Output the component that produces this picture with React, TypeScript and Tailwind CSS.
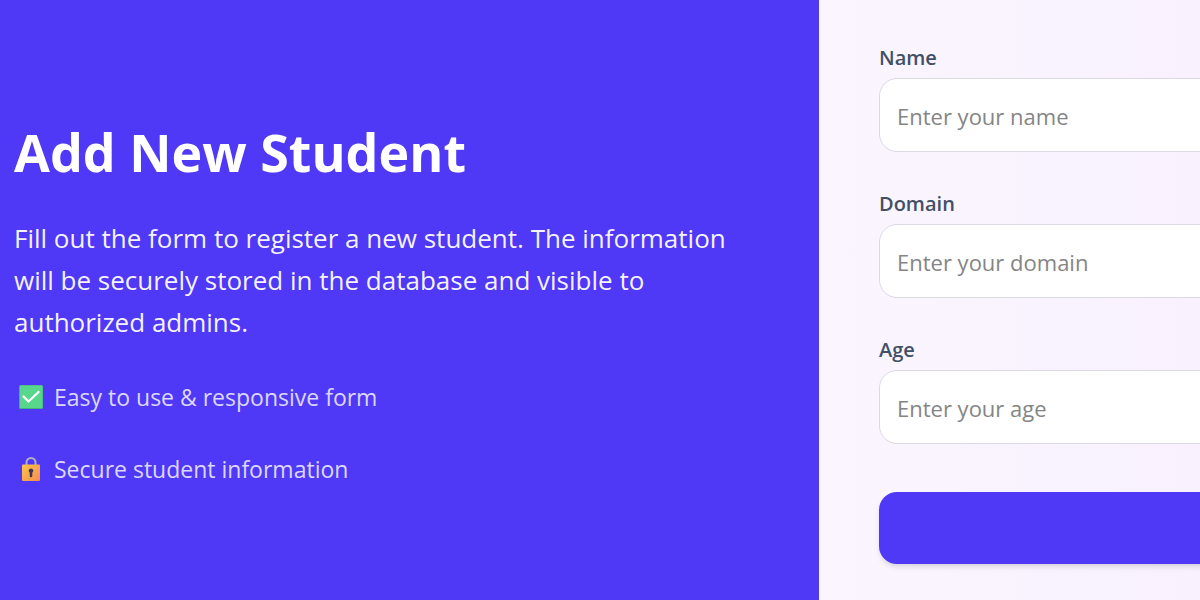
import React from "react";

const fields = [
  { id: "name", label: "Name", placeholder: "Enter your name", type: "text" },
  { id: "domain", label: "Domain", placeholder: "Enter your domain", type: "text" },
  { id: "age", label: "Age", placeholder: "Enter your age", type: "text" },
];

function CheckIcon() {
  return (
    <svg viewBox="0 0 26 26" className="size-[26px] shrink-0" aria-hidden="true">
      <rect x="1" y="1" width="24" height="24" rx="1.5" fill="#46ad85" />
      <rect x="2" y="1.5" width="22.5" height="22.5" rx="1" fill="#58d68b" />
      <path d="M5.500 12.500l5 5L20.500 8" fill="none" stroke="#fff" strokeWidth="2.300" strokeLinecap="round" strokeLinejoin="round" />
    </svg>
  );
}

function LockIcon() {
  return (
    <svg viewBox="0 0 26 26" className="size-[26px] shrink-0" aria-hidden="true">
      <defs>
        <linearGradient id="lock-fill" x1="0" y1="0" x2="1" y2="1">
          <stop offset="0" stopColor="#fcc748" />
          <stop offset="1" stopColor="#f58a50" />
        </linearGradient>
      </defs>
      <path d="M8.500 9.500V6.500a4.500 4.500 0 0 1 9 0v3" fill="none" stroke="#b3adbf" strokeWidth="2" />
      <rect x="4" y="8.500" width="18" height="16.500" rx="1" fill="url(#lock-fill)" />
      <path d="M13 12.500a2.300 2.300 0 0 1 1.300 4.200V20a1.300 1.300 0 0 1-2.600 0v-3.300a2.300 2.300 0 0 1 1.300-4.200z" fill="#40355c" />
    </svg>
  );
}

export default function App() {
  return (
    <main className="flex min-h-screen overflow-hidden font-['Open_Sans','Noto_Sans',sans-serif]">
      <section className="flex w-[68.250%] shrink-0 flex-col justify-center bg-[#4f39f6] pl-[14px] pr-20 text-white">
        <h1 className="text-[52px] font-bold leading-[78px]">Add New Student</h1>
        <p className="mt-[26px] text-[26px] leading-[42px] text-white/95">
          Fill out the form to register a new student. The information will be securely stored in the database and visible to authorized admins.
        </p>
        <ul className="mt-9 flex flex-col gap-9 text-[23px] leading-9 text-[#dcd7fd]">
          <li className="flex items-center gap-[10px] pl-1"><CheckIcon />Easy to use &amp; responsive form</li>
          <li className="flex items-center gap-[10px] pl-1"><LockIcon />Secure student information</li>
        </ul>
      </section>
      <section className="min-w-0 grow bg-linear-to-r from-[#faf5ff] to-[#f9f2fe] pl-[60px] pt-[42px]">
        <form className="flex w-[600px] flex-col gap-9">
          {fields.map((f) => (
            <div key={f.id}>
              <label htmlFor={f.id} className="block text-xl font-semibold leading-8 text-[#425066]">{f.label}</label>
              <input id={f.id} type={f.type} placeholder={f.placeholder} className="mt-1 block h-[74px] w-full rounded-[18px] border border-[#dcd9e6] bg-white px-[17px] pt-0.5 text-[22px] placeholder:text-[#858585]" />
            </div>
          ))}
          <button type="submit" aria-label="Add Student" className="mt-3 h-[72px] rounded-[18px] bg-[#4f39f6] shadow-md" />
        </form>
      </section>
    </main>
  );
}
